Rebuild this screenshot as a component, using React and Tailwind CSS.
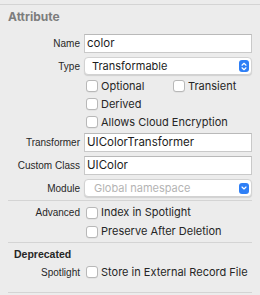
import { ChevronDown } from 'lucide-react';

const font = { fontFamily: 'Inter, "Liberation Sans", sans-serif' };
const labelFont = { fontFamily: '"Liberation Sans", Arial, sans-serif' };

function Label({ children }) {
  return (
    <div className="w-[80px] shrink-0 text-right text-[10px] text-[#272727]" style={labelFont}>
      {children}
    </div>
  );
}

function Row({ label, className = '', children }) {
  return (
    <div className={`flex items-center ${className}`}>
      <Label>{label}</Label>
      <div className="ml-[4px] flex flex-1 items-center pr-[8px]">{children}</div>
    </div>
  );
}

function Box() {
  return <div className="h-[12px] w-[12px] shrink-0 rounded-[3px] border border-[#b8b8b8] bg-white shadow-[0_0.5px_0.5px_rgba(0,0,0,0.08)]" />;
}

function Check({ children, className = '' }) {
  return (
    <div className={`flex items-center gap-[3px] pl-[2px] ${className}`}>
      <Box />
      <span className="text-[11px] text-[#262626] whitespace-nowrap">{children}</span>
    </div>
  );
}

function TextInput({ value }) {
  return (
    <div className="flex h-full w-full items-center border border-[#c9c9c9] border-t-[#b9b9b9] bg-white pl-[2px] text-[11.5px] text-[#1d1d1d]">
      {value}
    </div>
  );
}

function Stepper() {
  return (
    <div className="flex h-[12px] w-[10px] items-center justify-center rounded-[3px] bg-[#2e7ff6]">
      <svg width="6" height="9" viewBox="0 0 6 9" fill="none" stroke="white" strokeWidth="1.2" strokeLinecap="round" strokeLinejoin="round">
        <path d="M1 3.2 3 1.3 5 3.2" />
        <path d="M1 5.8 3 7.7 5 5.8" />
      </svg>
    </div>
  );
}

function Popup({ value, disabled, icon }) {
  return (
    <div className={`flex h-full w-full items-center justify-between rounded-[4px] border border-[#d2d2d2] bg-white pr-[2px] shadow-[0_1px_1px_rgba(0,0,0,0.12)] ${disabled ? 'pl-[9px]' : 'pl-[7px]'}`}>
      <span className={`text-[11px] ${disabled ? 'text-[#b4b4b4]' : 'text-[#1d1d1d]'}`}>{value}</span>
      {icon}
    </div>
  );
}

function Sep() {
  return <div className="mx-[8px] h-px bg-[#d4d4d4]" />;
}

export default function App() {
  return (
    <div className="h-[295px] w-[260px] overflow-hidden bg-[#ececec]" style={font}>
      <div className="pt-[4px]">
        <div className="h-px bg-[#d4d4d4]" />
      </div>

      <div className="flex h-[24px] items-center pl-[8px] text-[12px] font-bold text-[#7d7d7d]">Attribute</div>

      <Row label="Name" className="mt-[6px] h-[17px]">
        <TextInput value="color" />
      </Row>
      <Row label="Type" className="mt-[6px] h-[16px]">
        <Popup value="Transformable" icon={<Stepper />} />
      </Row>

      <Row label="" className="mt-[3px] h-[18px]">
        <Check className="w-[87px]">Optional</Check>
        <Check>Transient</Check>
      </Row>
      <Row label="" className="h-[18px]">
        <Check>Derived</Check>
      </Row>
      <Row label="" className="h-[18px]">
        <Check>Allows Cloud Encryption</Check>
      </Row>

      <Row label="Transformer" className="mt-[3px] h-[17px]">
        <TextInput value="UIColorTransformer" />
      </Row>
      <Row label="Custom Class" className="mt-[6px] h-[17px]">
        <TextInput value="UIColor" />
      </Row>
      <Row label="Module" className="mt-[6px] h-[16px]">
        <Popup
          value="Global namespace"
          disabled
          icon={
            <div className="flex h-[11px] w-[10px] items-center justify-center rounded-[3px] bg-[#2e7ff6]">
              <ChevronDown size={8} color="white" strokeWidth={3.5} />
            </div>
          }
        />
      </Row>

      <div className="mt-[4px]">
        <Sep />
      </div>

      <Row label="Advanced" className="mt-[2px] h-[19px]">
        <Check>Index in Spotlight</Check>
      </Row>
      <Row label="" className="h-[19px]">
        <Check>Preserve After Deletion</Check>
      </Row>

      <div className="mt-[1px]">
        <Sep />
      </div>

      <div className="mt-[4px] flex h-[16px] items-center pl-[14px] text-[10.5px] font-bold text-[#262626]" style={labelFont}>
        Deprecated
      </div>
      <Row label="Spotlight" className="h-[18px]">
        <Check>Store in External Record File</Check>
      </Row>

      <div className="mt-[11px]">
        <Sep />
      </div>
    </div>
  );
}
